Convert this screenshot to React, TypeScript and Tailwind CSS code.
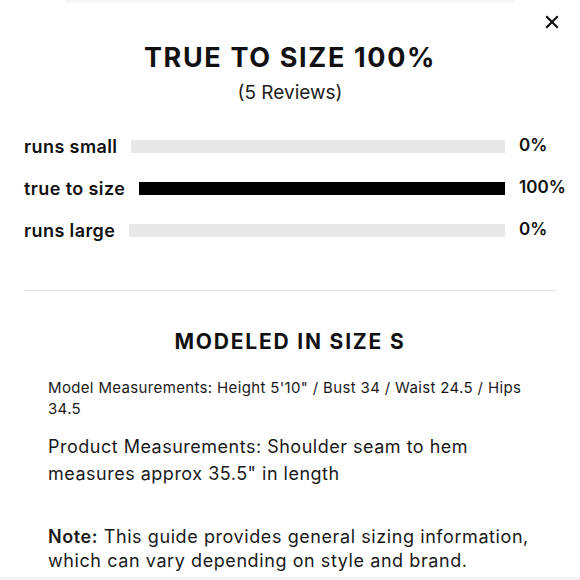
import React from "react";

const rows = [
  { label: "runs small", pct: 0 },
  { label: "true to size", pct: 100 },
  { label: "runs large", pct: 0 },
];

export default function App() {
  return (
    <div className="relative w-full h-[580px] overflow-hidden bg-white text-[#111] font-['Inter','Liberation_Sans',sans-serif]">
      <div className="mx-[65px] h-[3px] bg-[#f7f7f7]" />
      <button className="absolute right-[20px] top-[14px] w-[16px] h-[16px] flex items-center justify-center" aria-label="Close">
        <svg width="14" height="14" viewBox="0 0 14 14" fill="none" stroke="#111" strokeWidth="2.2" strokeLinecap="square">
          <path d="M2 2L12 12M12 2L2 12" />
        </svg>
      </button>
      <h2 className="mt-[39px] text-center text-[27px] leading-[32px] font-bold tracking-[1.65px]">TRUE TO SIZE 100%</h2>
      <p className="mt-[7px] text-center text-[19px] leading-[24px] text-[#222]">(5 Reviews)</p>
      <div className="mt-[27px] px-[24px] flex flex-col gap-[14px]">
        {rows.map((r) => (
          <div key={r.label} className="flex items-center h-[28px]">
            <span className="text-[18px] tracking-[0.4px] font-semibold whitespace-nowrap">{r.label}</span>
            <div className="flex-1 ml-[14px] h-[13px] bg-[#e8e8e8]">
              <div className="h-full bg-black" style={{ width: `${r.pct}%` }} />
            </div>
            <span className="w-[51px] pl-[14px] text-[17px] font-semibold whitespace-nowrap">{r.pct}%</span>
          </div>
        ))}
      </div>
      <div className="mt-[46px] mx-[24px] h-[1px] bg-[#e5e5e5]" />
      <h3 className="mt-[37px] text-center text-[21px] leading-[28px] font-bold tracking-[1.8px]">MODELED IN SIZE S</h3>
      <div className="pl-[48px] pr-[40px] text-[#1a1a1a]">
        <p className="mt-[21px] text-[15px] leading-[21px] tracking-[0.35px]">Model Measurements: Height 5'10" / Bust 34 / Waist 24.5 / Hips 34.5</p>
        <p className="mt-[14px] text-[18px] leading-[27px] tracking-[0.5px]">Product Measurements: Shoulder seam to hem measures approx 35.5" in length</p>
        <p className="mt-[38px] text-[18px] leading-[24px] tracking-[0.58px]"><span className="font-semibold">Note:</span> This guide provides general sizing information, which can vary depending on style and brand.</p>
      </div>
      <div className="absolute left-0 right-0 bottom-0 h-[3px] bg-[#f4f4f4]" />
    </div>
  );
}
